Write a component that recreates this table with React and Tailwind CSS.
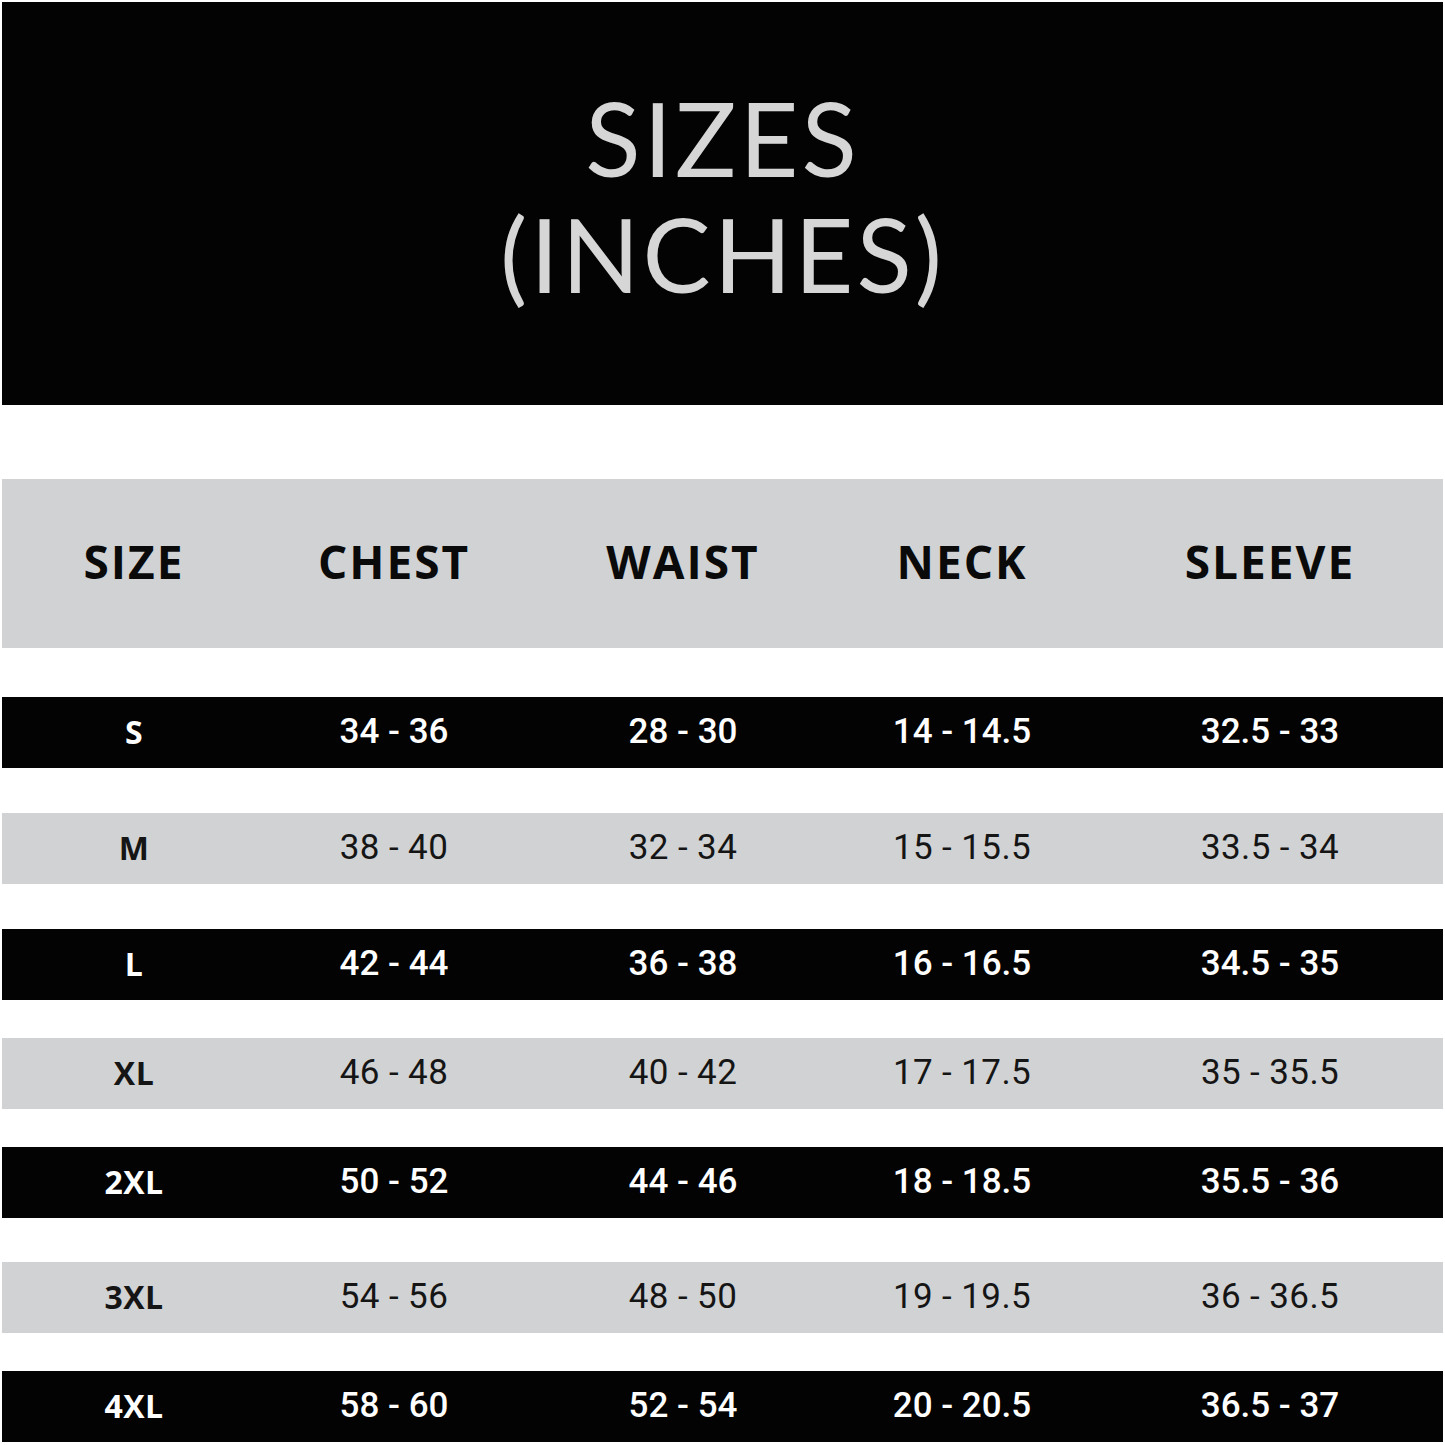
const rows = [
  { size: "S", dark: true, gap: "mt-[49px]", vals: ["34 - 36", "28 - 30", "14 - 14.5", "32.5 - 33"] },
  { size: "M", dark: false, gap: "mt-[45px]", vals: ["38 - 40", "32 - 34", "15 - 15.5", "33.5 - 34"] },
  { size: "L", dark: true, gap: "mt-[45px]", vals: ["42 - 44", "36 - 38", "16 - 16.5", "34.5 - 35"] },
  { size: "XL", dark: false, gap: "mt-[38px]", vals: ["46 - 48", "40 - 42", "17 - 17.5", "35 - 35.5"] },
  { size: "2XL", dark: true, gap: "mt-[38px]", vals: ["50 - 52", "44 - 46", "18 - 18.5", "35.5 - 36"] },
  { size: "3XL", dark: false, gap: "mt-[44px]", vals: ["54 - 56", "48 - 50", "19 - 19.5", "36 - 36.5"] },
  { size: "4XL", dark: true, gap: "mt-[38px]", vals: ["58 - 60", "52 - 54", "20 - 20.5", "36.5 - 37"] },
];

const headers = ["SIZE", "CHEST", "WAIST", "NECK", "SLEEVE"];

// column widths picked so the text centres line up with the chart
const cols = "grid grid-cols-[264px_256px_322px_236px_1fr]";

const SizeRow = ({ row }) => (
  <div
    className={`${cols} ${row.gap} h-[71px] items-center ${
      row.dark ? "bg-[#030303] text-white" : "bg-[#d1d2d4] text-[#151515]"
    }`}
  >
    <div className="text-center text-[32px] font-bold tracking-[0.5px] font-['Open_Sans',sans-serif] -mt-[2px]">
      {row.size}
    </div>
    {row.vals.map((v, i) => (
      <div
        key={i}
        className={`text-center text-[35px] font-['Roboto',sans-serif] ${
          row.dark ? "font-medium tracking-[0px]" : "font-normal tracking-[0.4px]"
        } ${i === 3 ? "pl-[17px]" : ""}`}
      >
        {v}
      </div>
    ))}
  </div>
);

export default function App() {
  return (
    <div className="w-[1445px] h-[1445px] bg-white pl-[2px] pt-[2px] overflow-hidden">
      <div className="w-[1441px]">
        <div className="h-[403px] bg-[#030303] pt-[78px] text-center text-[#d6d6d6] font-['Lato',sans-serif] font-normal text-[102px] leading-[116px] tracking-[3px]">
          <div>SIZES</div>
          <div>(INCHES)</div>
        </div>

        <div className={`${cols} mt-[74px] h-[169px] items-center bg-[#d1d2d4] text-[#0a0a0a]`}>
          {headers.map((h, i) => (
            <div
              key={h}
              className={`text-center text-[46px] font-bold tracking-[2px] font-['Open_Sans',sans-serif] -mt-[4px] ${
                i === 4 ? "pl-[17px]" : ""
              }`}
            >
              {h}
            </div>
          ))}
        </div>

        {rows.map((r) => (
          <SizeRow key={r.size} row={r} />
        ))}
      </div>
    </div>
  );
}
